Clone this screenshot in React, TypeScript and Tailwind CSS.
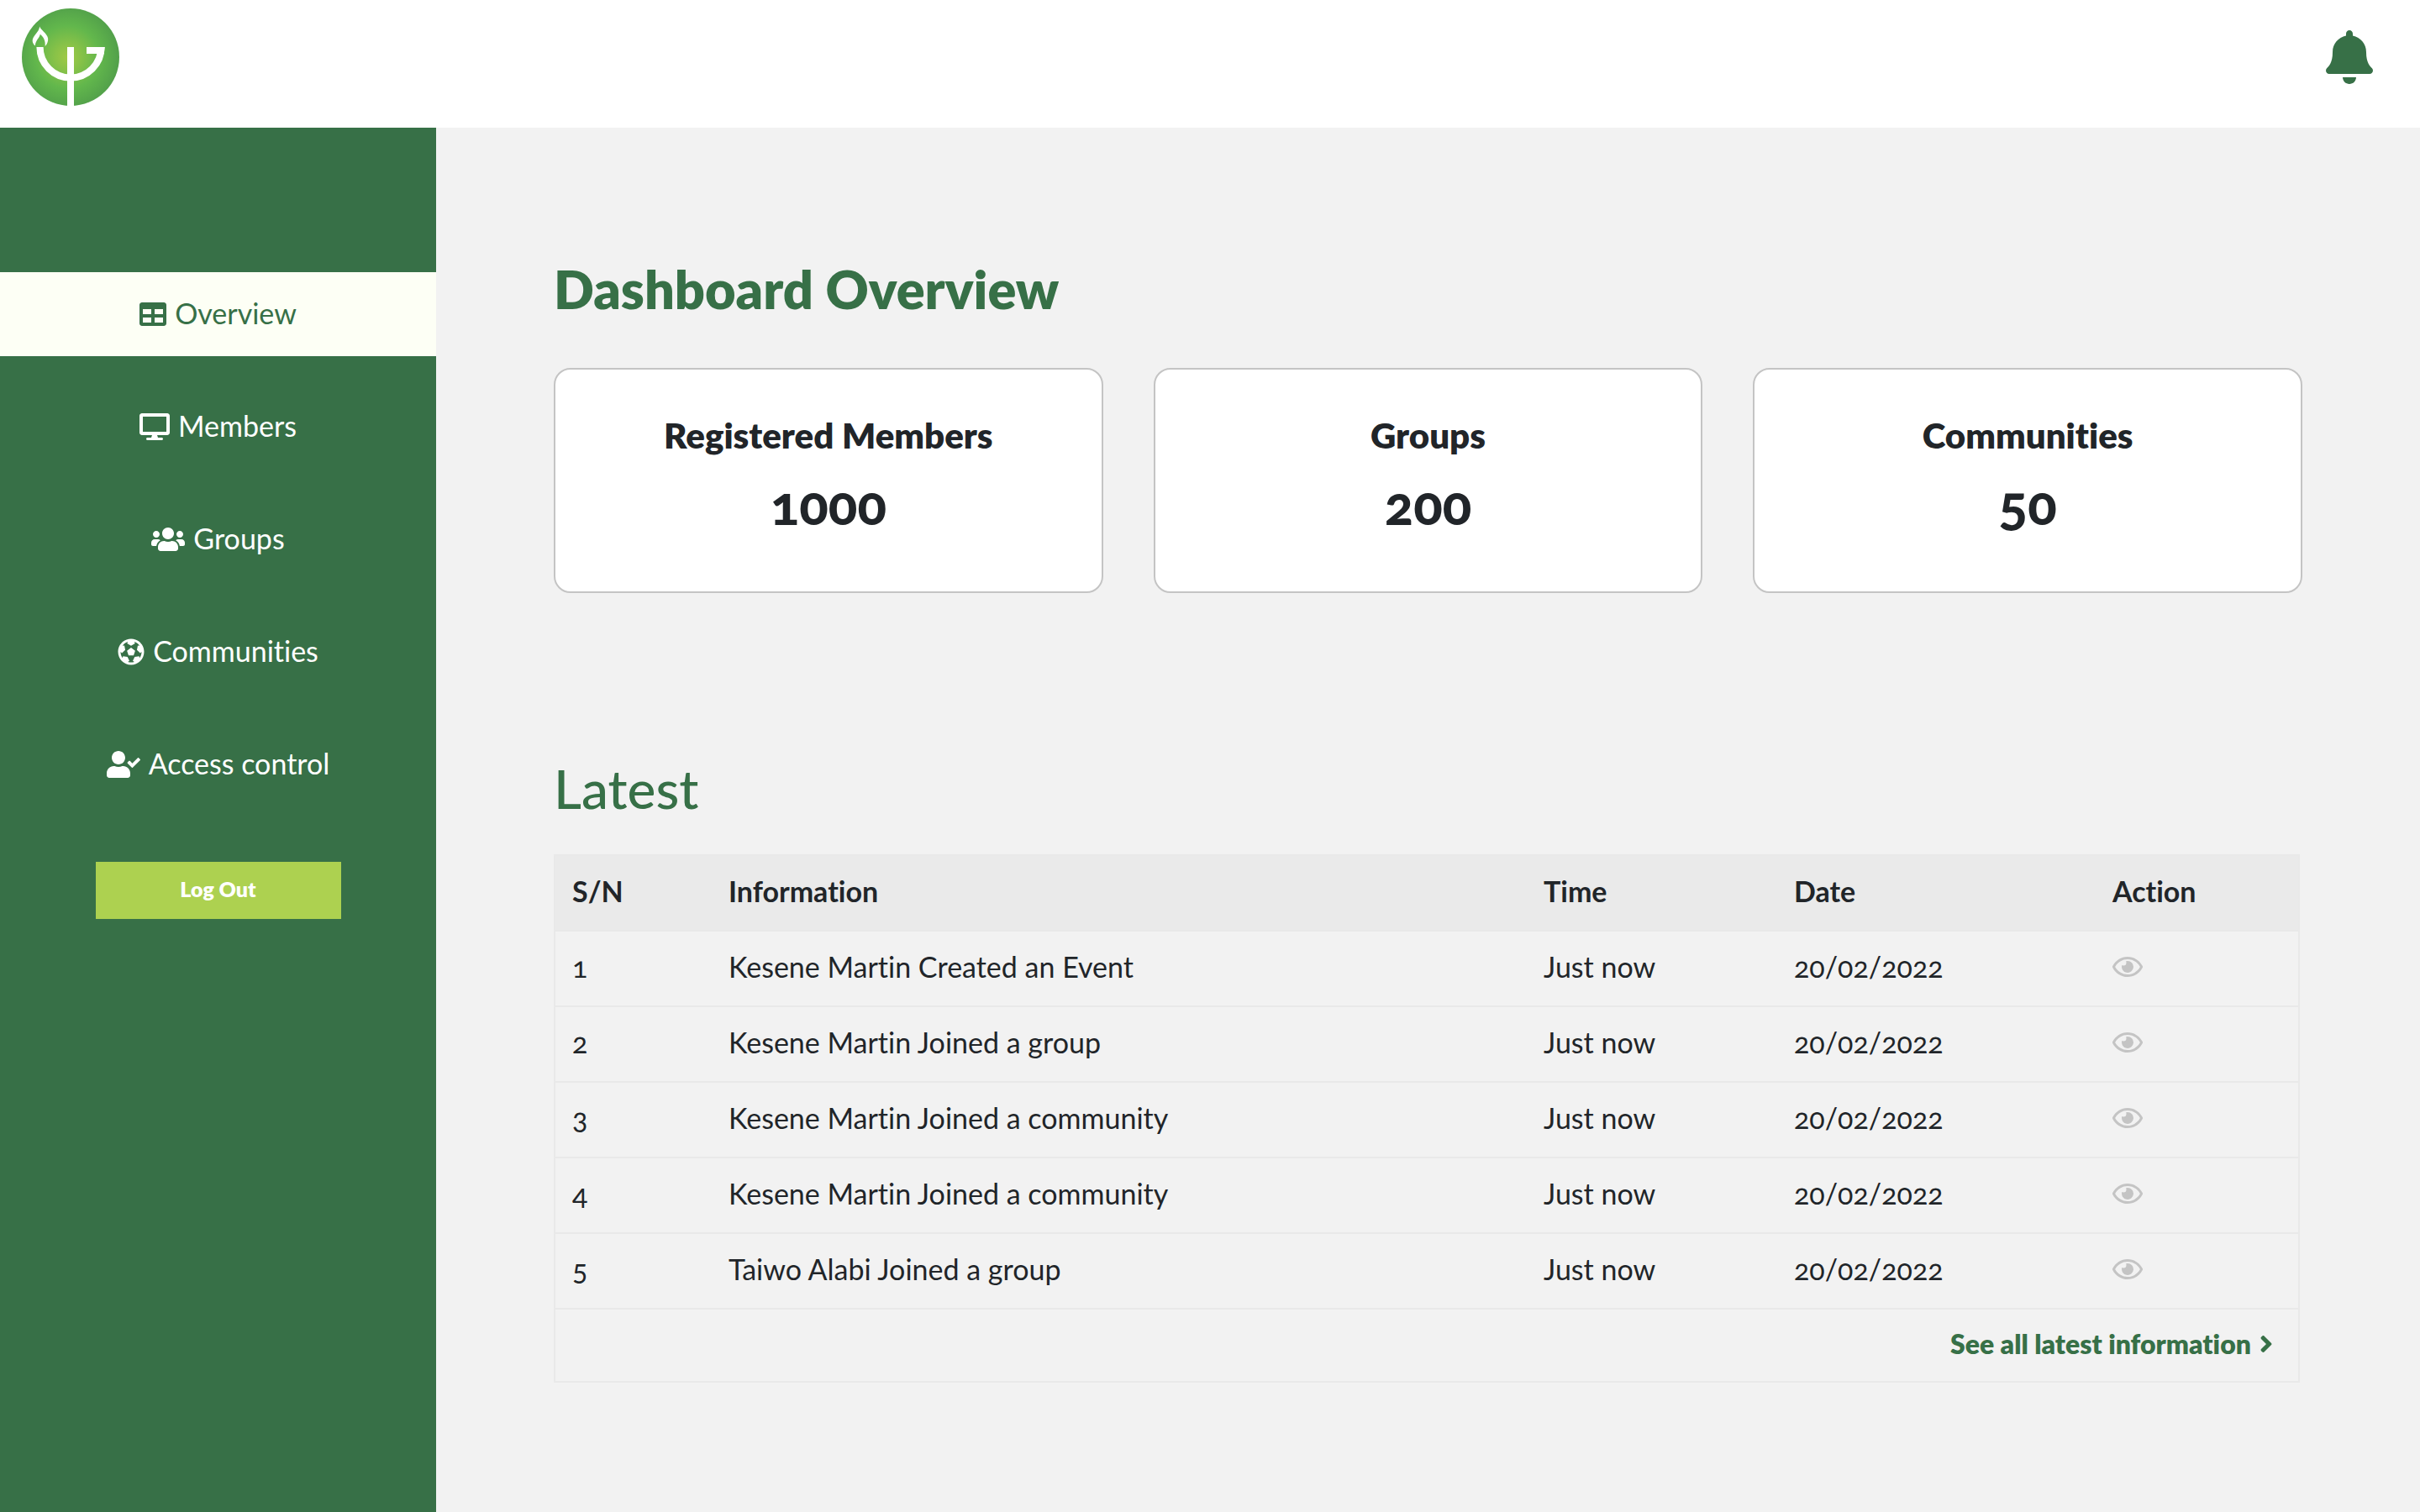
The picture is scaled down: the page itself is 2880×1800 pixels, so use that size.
import type { IconType } from "react-icons";
import {
  FaAngleRight,
  FaBell,
  FaDesktop,
  FaFutbol,
  FaRegEye,
  FaTable,
  FaUserCheck,
  FaUsers,
} from "react-icons/fa";

type NavItem = { label: string; icon: IconType; size: string; active?: boolean };

const navItems: NavItem[] = [
  { label: "Overview", icon: FaTable, size: "h-8 w-8", active: true },
  { label: "Members", icon: FaDesktop, size: "h-8 w-9" },
  { label: "Groups", icon: FaUsers, size: "h-8 w-10" },
  { label: "Communities", icon: FaFutbol, size: "h-8 w-8" },
  { label: "Access control", icon: FaUserCheck, size: "h-8 w-10" },
];

const stats = [
  { label: "Registered Members", value: "1000" },
  { label: "Groups", value: "200" },
  { label: "Communities", value: "50" },
];

const rows = [
  "Kesene Martin Created an Event",
  "Kesene Martin Joined a group",
  "Kesene Martin Joined a community",
  "Kesene Martin Joined a community",
  "Taiwo Alabi Joined a group",
].map((information, i) => ({
  sn: i + 1,
  information,
  time: "Just now",
  date: "20/02/2022",
}));

function Logo() {
  return (
    <svg viewBox="0 0 116 116" className="size-[116px]" role="img" aria-label="Home">
      <defs>
        <radialGradient id="leaf" cx="47%" cy="50%" r="54%">
          <stop offset="0" stopColor="#a0c946" />
          <stop offset="0.25" stopColor="#88c248" />
          <stop offset="0.6" stopColor="#62b74c" />
          <stop offset="1" stopColor="#519f4a" />
        </radialGradient>
      </defs>
      <circle cx="58" cy="58" r="58" fill="url(#leaf)" />
      <path d="M21.5 46a36.5 36.5 0 0 0 73 0" fill="none" stroke="#fff" strokeWidth="8.2" />
      <path d="M54 46h8v70h-8zM77 46h21.7l-1 8H77z" fill="#fff" />
      <path
        d="M21.2 21.5c1.5 4.500 8.600 8 9.900 14 .5 3.400-.9 7-3.400 9.500.4-6.500-1.200-10.500-5.900-14.300-.6 4.500-5.300 6.500-6 13.800-2.600-2.500-3.700-5-2.900-7.800 1.600-5.200 7.500-8.600 8.300-15.200z"
        fill="#fff"
      />
    </svg>
  );
}

function Header() {
  return (
    <header className="flex h-[152px] items-center justify-between bg-white pr-14 pb-4 pl-[26px]">
      <a href="#home">
        <Logo />
      </a>
      <button type="button" aria-label="Notifications" className="text-[#377047]">
        <FaBell className="h-16 w-14" />
      </button>
    </header>
  );
}

function Sidebar() {
  return (
    <aside className="flex w-[519px] shrink-0 flex-col items-center bg-[#377047] pt-[172px]">
      <nav className="flex w-full flex-col gap-[34px]">
        {navItems.map(({ label, icon: Icon, size, active }) => (
          <a
            key={label}
            href="#nav"
            aria-current={active ? "page" : undefined}
            className={
              active
                ? "flex h-[100px] items-center justify-center gap-[10px] bg-[#fdfff5] text-[34px] leading-[44px] text-[#377047]"
                : "flex h-[100px] items-center justify-center gap-[10px] text-[34px] leading-[44px] text-white"
            }
          >
            <Icon className={size} />
            <span className="pb-[3px]">{label}</span>
          </a>
        ))}
      </nav>
      <button
        type="button"
        className="mt-[66px] h-[68px] w-[292px] bg-[#add150] pb-[3px] text-[25px] font-extrabold text-white"
      >
        Log Out
      </button>
    </aside>
  );
}

function StatCard({ label, value }: { label: string; value: string }) {
  return (
    <div className="rounded-[20px] border-2 border-[#c4c4c4] bg-white pt-[52px] pb-[67px] text-center">
      <h2 className="text-[42px] leading-[52px] font-extrabold">{label}</h2>
      <p className="mt-[21px] text-[64px] leading-[72px] font-black">{value}</p>
    </div>
  );
}

function LatestTable() {
  return (
    <div className="mr-[3px] border-2 border-[#e9e9e9]">
      <table className="w-full table-fixed border-separate border-spacing-0 text-left text-[34px] leading-[44px]">
        <thead>
          <tr className="bg-[#eaeaea] [&>th]:border-b-2 [&>th]:border-[#e9e9e9] [&>th]:px-5 [&>th]:pt-5 [&>th]:pb-6">
            <th scope="col" className="w-[186px]">S/N</th>
            <th scope="col">Information</th>
            <th scope="col" className="w-[298px]">Time</th>
            <th scope="col" className="w-[379px]">Date</th>
            <th scope="col" className="w-[241px]">Action</th>
          </tr>
        </thead>
        <tbody>
          {rows.map((row) => (
            <tr
              key={row.sn}
              className="[&>td]:border-b-2 [&>td]:border-[#e9e9e9] [&>td]:px-5 [&>td]:pt-5 [&>td]:pb-6"
            >
              <td>{row.sn}</td>
              <td>{row.information}</td>
              <td>{row.time}</td>
              <td>{row.date}</td>
              <td>
                <button
                  type="button"
                  aria-label={`View entry ${row.sn}`}
                  className="flex h-11 items-center text-[#c4c4c4]"
                >
                  <FaRegEye className="h-8 w-9" />
                </button>
              </td>
            </tr>
          ))}
        </tbody>
        <tfoot>
          <tr>
            <td colSpan={5} className="pt-[17px] pr-[30px] pb-5">
              <a
                href="#latest"
                className="flex h-12 items-center justify-end gap-[10px] text-[32px] font-extrabold text-[#377047]"
              >
                See all latest information
                <FaAngleRight className="h-8 w-4" />
              </a>
            </td>
          </tr>
        </tfoot>
      </table>
    </div>
  );
}

export default function App() {
  return (
    <div className="flex min-h-screen flex-col bg-[#f2f2f2] font-['Lato','Open_Sans',sans-serif] text-[#212529] oldstyle-nums [font-variant-ligatures:none]">
      <Header />
      <div className="flex grow">
        <Sidebar />
        <main className="min-w-0 flex-1 px-[140px] pt-[154px] pb-20">
          <h1 className="text-[63px] leading-[76px] font-extrabold text-[#377047]">
            Dashboard Overview
          </h1>
          <section className="mt-14 grid grid-cols-3 gap-[60px]">
            {stats.map((stat) => (
              <StatCard key={stat.label} {...stat} />
            ))}
          </section>
          <h2 className="mt-[195px] mb-10 text-[64px] leading-[76px] font-medium text-[#377047]">
            Latest
          </h2>
          <LatestTable />
        </main>
      </div>
    </div>
  );
}
